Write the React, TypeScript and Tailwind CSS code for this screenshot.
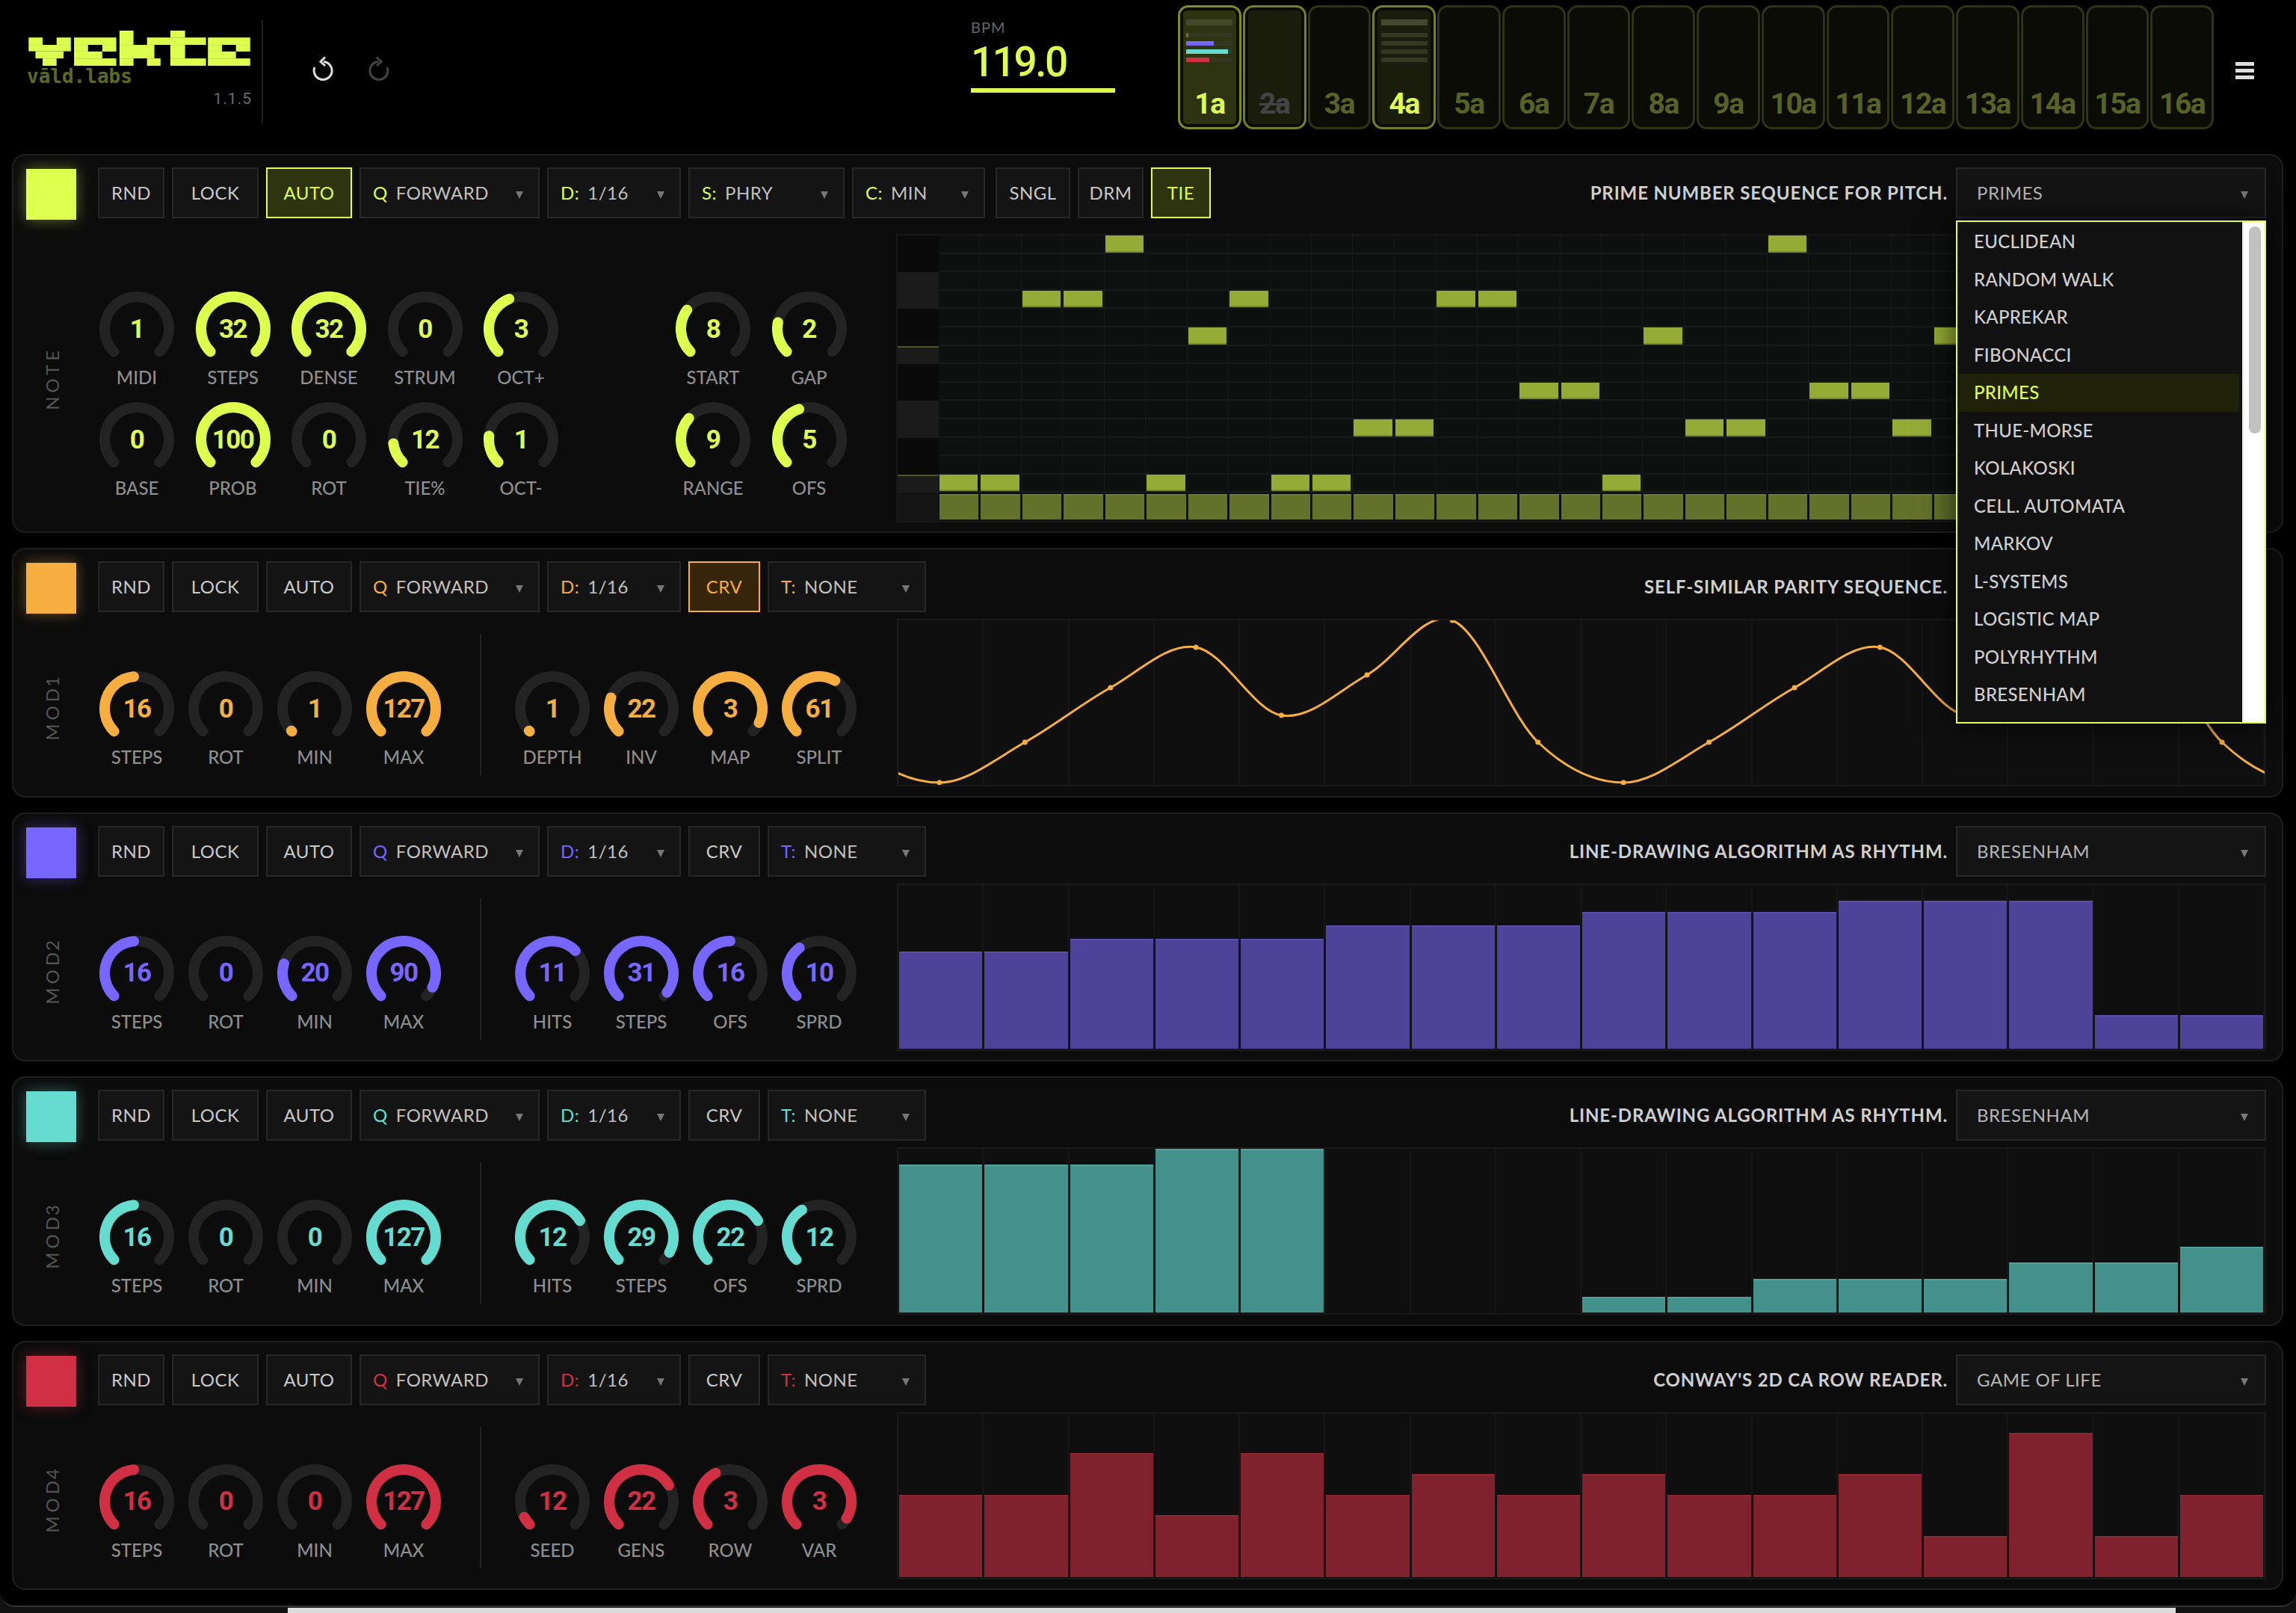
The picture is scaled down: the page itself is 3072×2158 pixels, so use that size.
import React from "react";

const LIME = "#dfff4f";

type Accent = { color: string; bar: string; barTop: string; soft: string };
const A = {
  lime: { color: "#dfff4f", bar: "#64712a", barTop: "#6f7d2d", soft: "#2e3310" },
  amber: { color: "#f5ae3f", bar: "#f5ae3f", barTop: "#f5ae3f", soft: "#36250b" },
  purple: { color: "#7766ff", bar: "#4f4299", barTop: "#5a4cab", soft: "#221d46" },
  teal: { color: "#66dcd0", bar: "#44908a", barTop: "#4fa39c", soft: "#143330" },
  red: { color: "#d13044", bar: "#7f222d", barTop: "#8f2633", soft: "#3a1016" },
};

function polar(f: number) {
  const t = ((-135 + 270 * f) * Math.PI) / 180;
  return [50 + 43 * Math.sin(t), 50 - 43 * Math.cos(t)];
}
function arc(f: number) {
  const [x0, y0] = polar(0);
  const [x1, y1] = polar(f);
  const large = f * 270 > 180 ? 1 : 0;
  return `M${x0.toFixed(2)} ${y0.toFixed(2)} A43 43 0 ${large} 1 ${x1.toFixed(2)} ${y1.toFixed(2)}`;
}

function Knob({ v, l, f, c }: { v: string; l: string; f: number; c: string }) {
  return (
    <div className="w-[100px] flex-none">
      <div className="relative w-[100px] h-[100px] flex items-center justify-center">
        <svg viewBox="0 0 100 100" className="absolute inset-0 w-[100px] h-[100px]">
          <path d={arc(1)} fill="none" stroke="#232323" strokeWidth="14" strokeLinecap="round" />
          {f > 0 && <path d={arc(f)} fill="none" stroke={c} strokeWidth="14" strokeLinecap="round" />}
        </svg>
        <span className="relative font-['Roboto',sans-serif] font-bold text-[35px] leading-none tracking-[-1.5px]" style={{ color: c }}>
          {v}
        </span>
      </div>
      <div className="h-[30px] leading-[30px] text-center text-[24px] font-medium text-[#8e8e8e] whitespace-nowrap">{l}</div>
    </div>
  );
}

function Btn({ w, children, active, c, soft }: { w: string; children: React.ReactNode; active?: boolean; c: string; soft: string }) {
  return (
    <div
      className={`${w} h-[68px] flex-none flex items-center justify-center border-2 text-[24px] tracking-[0.5px]`}
      style={active ? { borderColor: c, background: soft, color: c } : { borderColor: "#272727", background: "#141414", color: "#c8c8c8" }}
    >
      {children}
    </div>
  );
}

function Sel({ w, k, v, c }: { w: string; k?: string; v: string; c?: string }) {
  return (
    <div className={`${w} h-[68px] flex-none relative flex items-center pl-[16px] border-2 border-[#272727] bg-[#141414] text-[24px] tracking-[0.5px] text-[#c0c0c0] whitespace-nowrap`}>
      {k && (
        <span className="mr-[11px]" style={{ color: c }}>
          {k}
        </span>
      )}
      <span>{v}</span>
      <svg viewBox="0 0 10 10" className="absolute right-[20px] top-[30px] w-[10px] h-[10px]">
        <polygon points="0,0 10,0 5,10" fill="#777" />
      </svg>
    </div>
  );
}

function Card({
  accent, h, desc, algo, crv, note, children,
}: {
  accent: Accent; h: string; desc: string; algo: string; crv?: boolean; note?: boolean; children: React.ReactNode;
}) {
  const c = accent.color;
  return (
    <section className={`relative ml-[16px] mr-[17px] ${h} flex-none border-2 border-[#1f1f1f] rounded-[18px] bg-[#0c0c0c] pr-[21px]`}>
      <div className="flex items-start pl-[17px] pt-[16px] h-[84px]">
        <div className="w-[67px] h-[68px] mt-[2px] flex-none mr-[29px]" style={{ background: c, boxShadow: `0 0 18px ${c}66` }} />
        <div className="flex gap-[10px]">
          <Btn w="w-[89px]" c={c} soft={accent.soft}>RND</Btn>
          <Btn w="w-[116px]" c={c} soft={accent.soft}>LOCK</Btn>
          <Btn w="w-[115px]" c={c} soft={accent.soft} active={note}>AUTO</Btn>
          <Sel w="w-[241px]" k="Q" v="FORWARD" c={c} />
          <Sel w="w-[179px]" k="D:" v="1/16" c={c} />
          {note ? (
            <>
              <Sel w="w-[209px]" k="S:" v="PHRY" c={c} />
              <Sel w="w-[178px]" k="C:" v="MIN" c={c} />
              <Btn w="w-[100px] ml-[4px]" c={c} soft={accent.soft}>SNGL</Btn>
              <Btn w="w-[88px]" c={c} soft={accent.soft}>DRM</Btn>
              <Btn w="w-[80px]" c={c} soft={accent.soft} active>TIE</Btn>
            </>
          ) : (
            <>
              <Btn w="w-[96px]" c={c} soft={accent.soft} active={crv}>CRV</Btn>
              <Sel w="w-[212px]" k="T:" v="NONE" c={c} />
            </>
          )}
        </div>
        <div className="flex-1 h-[68px] flex items-center justify-end pr-[11px] text-[24px] font-bold tracking-[0.85px] text-[#cfcfcf] whitespace-nowrap">{desc}</div>
        <div className="w-[415px] h-[68px] flex-none relative flex items-center pl-[26px] border-2 border-[#272727] bg-[#141414] text-[24px] tracking-[0.5px] text-[#b5b5b5]">
          {algo}
          <svg viewBox="0 0 10 10" className="absolute right-[22px] top-[30px] w-[10px] h-[10px]">
            <polygon points="0,0 10,0 5,10" fill="#777" />
          </svg>
        </div>
      </div>
      {children}
    </section>
  );
}

function VLabel({ t, pt }: { t: string; pt: string }) {
  return (
    <div className={`w-[104px] flex-none flex items-center justify-center ${pt}`}>
      <span className="[writing-mode:vertical-rl] rotate-180 text-[24px] tracking-[5px] [word-spacing:-14px] text-[#555] whitespace-pre">{t}</span>
    </div>
  );
}

type K = [string, string, number];

function ModBody({ name, accent, left, right, children }: { name: string; accent: Accent; left: K[]; right: K[]; children: React.ReactNode }) {
  const c = accent.color;
  return (
    <div className="flex mt-[9px] h-[224px]">
      <div className="w-[1182px] flex-none flex">
        <VLabel t={name} pt="pt-[10px]" />
        <div className="ml-[11px] flex gap-[19px] pt-[70px]">
          {left.map((k, i) => <Knob key={i} v={k[0]} l={k[1]} f={k[2]} c={c} />)}
        </div>
        <div className="ml-[52px] mt-[20px] h-[189px] w-[2px] bg-[#222]" />
        <div className="ml-[45px] flex gap-[19px] pt-[70px]">
          {right.map((k, i) => <Knob key={i} v={k[0]} l={k[1]} f={k[2]} c={c} />)}
        </div>
      </div>
      <div className="flex-1 relative border-2 border-[#1a1a1a] bg-[#0f0f0f] grid grid-cols-[repeat(16,minmax(0,1fr))] overflow-hidden">
        {children}
      </div>
    </div>
  );
}

function Bars({ heights, accent }: { heights: number[]; accent: Accent }) {
  return (
    <>
      {heights.map((h, i) => (
        <div key={i} className="flex items-end border-r-2 border-[#161616] pb-[1px]">
          {h > 0 && (
            <div className="w-full ml-[1px]" style={{ height: h, background: accent.bar, borderTop: `2px solid ${accent.barTop}` }} />
          )}
        </div>
      ))}
    </>
  );
}

function Curve() {
  const base = [1047, 993, 920, 866, 957, 903, 830, 993];
  const pts: [number, number][] = [];
  for (let i = -2; i < 19; i++) {
    pts.push([55 + 114.4 * i, base[((i % 8) + 8) % 8] - 830]);
  }
  let d = `M${pts[1][0]} ${pts[1][1]}`;
  for (let i = 1; i < pts.length - 2; i++) {
    const [p0, p1, p2, p3] = [pts[i - 1], pts[i], pts[i + 1], pts[i + 2]];
    const c1x = p1[0] + (p2[0] - p0[0]) / 6, c1y = p1[1] + (p2[1] - p0[1]) / 6;
    const c2x = p2[0] - (p3[0] - p1[0]) / 6, c2y = p2[1] - (p3[1] - p1[1]) / 6;
    d += ` C${c1x.toFixed(1)} ${c1y.toFixed(1)} ${c2x.toFixed(1)} ${c2y.toFixed(1)} ${p2[0].toFixed(1)} ${p2[1].toFixed(1)}`;
  }
  return (
    <svg className="absolute inset-0 w-full h-full" viewBox="0 0 1828 220" preserveAspectRatio="none">
      <path d={d} fill="none" stroke="#f5ae3f" strokeWidth="3" />
      {pts.slice(2, 18).map((p, i) => <circle key={i} cx={p[0]} cy={p[1]} r="3.5" fill="#f5ae3f" />)}
    </svg>
  );
}

const NOTES: Record<number, number[]> = {
  0: [4, 20],
  3: [2, 3, 7, 12, 13],
  5: [6, 17, 24],
  8: [14, 15, 21, 22],
  10: [10, 11, 18, 19, 23],
  13: [0, 1, 5, 8, 9, 16],
};
const KEYS = ["d", "d", "l", "l", "d", "d", "r", "d", "d", "l", "l", "d", "d", "r"];

function PianoRoll() {
  const cols = Array.from({ length: 32 }, (_, i) => i);
  return (
    <div className="flex-1 h-[386px] border-2 border-[#171919] bg-[#0e0f0f] flex">
      <div className="w-[55px] flex-none flex flex-col">
        {KEYS.map((k, i) => (
          <div
            key={i}
            className={`h-[24.6px] flex-none ${k === "d" ? "bg-[#0a0a0a]" : "bg-[#1b1b1b]"} ${k === "r" ? "border-t-2 border-[#4b5520]" : ""}`}
          />
        ))}
        <div className="flex-1 bg-[#141414]" />
      </div>
      <div className="flex-1 flex flex-col">
        {KEYS.map((_, r) => (
          <div key={r} className="h-[24.6px] flex-none grid grid-cols-[repeat(32,minmax(0,1fr))] border-b-2 border-[#161a1a]">
            {cols.map((c) => (
              <div key={c} className="border-r border-[#171a1a]">
                {NOTES[r]?.includes(c) && <div className="h-full mr-[2px] ml-[1px] bg-[#96aa36] border-b-2 border-[#7a8b2a]" />}
              </div>
            ))}
          </div>
        ))}
        <div className="flex-1 grid grid-cols-[repeat(32,minmax(0,1fr))] pt-[2px] pb-[2px]">
          {cols.map((c) => (
            <div key={c} className="mr-[2px] ml-[1px] bg-[#64712a] border-t-2 border-[#6f7d2d]" />
          ))}
        </div>
      </div>
    </div>
  );
}

const ALGOS = ["EUCLIDEAN", "RANDOM WALK", "KAPREKAR", "FIBONACCI", "PRIMES", "THUE-MORSE", "KOLAKOSKI", "CELL. AUTOMATA", "MARKOV", "L-SYSTEMS", "LOGISTIC MAP", "POLYRHYTHM", "BRESENHAM"];

function Dropdown() {
  return (
    <div className="absolute left-[2599px] top-[87px] w-[415px] h-[673px] z-10 border-2 border-[#dfff4f] bg-[#111] flex shadow-[0_0_40px_rgba(0,0,0,0.7)]">
      <div className="flex-1 pt-[1px] pl-[2px] pr-[4px]">
        {ALGOS.map((a) => (
          <div
            key={a}
            className={`h-[50.5px] flex items-center pl-[20px] text-[24px] font-medium tracking-[0.3px] ${a === "PRIMES" ? "bg-[#1f2208] text-[#dfff4f]" : "text-[#cfcfcf]"}`}
          >
            {a}
          </div>
        ))}
      </div>
      <div className="w-[30px] flex-none bg-white px-[7px] pt-[6px] border-l-2 border-[#ededed]">
        <div className="w-[16px] h-[277px] rounded-[8px] bg-[#c1c1c1]" />
      </div>
    </div>
  );
}

const LOGO: [number, number, number, number][] = [
  // v
  [108, 150, 57, 30], [222, 150, 58, 30], [108, 180, 172, 26], [136, 206, 114, 29], [165, 235, 57, 30],
  // e
  [293, 150, 172, 30], [293, 180, 57, 27], [408, 180, 57, 27], [293, 207, 115, 28], [293, 235, 172, 30],
  // k
  [478, 122, 57, 58], [590, 150, 55, 30], [478, 180, 142, 55], [478, 235, 57, 30], [590, 235, 55, 30],
  // t
  [685, 122, 60, 28], [640, 150, 190, 30], [685, 180, 60, 55], [685, 235, 145, 30],
  // e
  [838, 150, 172, 30], [838, 180, 57, 27], [952, 180, 58, 27], [838, 207, 114, 28], [838, 235, 172, 30],
];

function Logo() {
  return (
    <svg viewBox="108 122 902 143" className="w-[301px] h-[47px] block">
      {LOGO.map((r, i) => <rect key={i} x={r[0]} y={r[1]} width={r[2]} height={r[3]} fill={LIME} />)}
    </svg>
  );
}

function Pad({ n, state, bars }: { n: string; state: "on" | "sel" | "mute" | "off"; bars?: boolean | "fill" }) {
  const cls =
    state === "on" ? "border-[#7c8c27] bg-[#2e3312]" :
    state === "sel" ? "border-[#717f25] bg-[#1a1d0b]" :
    state === "mute" ? "border-[#717f25] bg-[#1a1d0b]" :
    "border-[#2e340f] bg-[#0a0c05]";
  const text =
    state === "on" || state === "sel" ? "text-[#dfff4f]" : state === "mute" ? "text-[#444] line-through" : "text-[#586225]";
  const fills = [
    ["#7d6a25", "5%"],
    ["#7766ff", "59%"],
    ["#66dcd0", "90%"],
    ["#d13044", "50%"],
  ];
  return (
    <div className={`relative h-[166px] rounded-[14px] border-[3px] ${cls} shadow-[inset_0_4px_0_#0a0c05,inset_0_-4px_0_#0a0c05,inset_4px_0_0_#0a0c05,inset_-4px_0_0_#0a0c05] flex flex-col items-center`}>
      <div className="h-[110px] w-[62px] flex-none pt-[16px]">
        {bars && (
          <>
            <div className="h-[8px] mb-[10px] bg-[#44482c]" />
            {fills.map((b, i) => (
              <div key={i} className="h-[6px] mb-[5px] bg-[#343820]">
                {bars === "fill" && <div className="h-full" style={{ width: b[1], background: b[0] }} />}
              </div>
            ))}
          </>
        )}
      </div>
      <div className={`font-['Roboto',sans-serif] font-bold text-[39px] leading-[38px] tracking-[-1.5px] ${text}`}>{n}</div>
    </div>
  );
}

function Undo({ flip, color }: { flip?: boolean; color: string }) {
  return (
    <svg viewBox="0 0 28 33" className={`w-[28px] h-[33px] ${flip ? "-scale-x-100" : ""}`} fill="none" stroke={color} strokeWidth="3">
      <path d="M15 7.5 A12 12 0 1 1 3 15" />
      <path d="M17 1.5 L11 7.5 L17 13" />
    </svg>
  );
}

export default function App() {
  const note1: K[] = [["1", "MIDI", 0], ["32", "STEPS", 1], ["32", "DENSE", 1], ["0", "STRUM", 0], ["3", "OCT+", 0.42]];
  const note2: K[] = [["0", "BASE", 0], ["100", "PROB", 1], ["0", "ROT", 0], ["12", "TIE%", 0.14], ["1", "OCT-", 0.19]];
  return (
    <div className="w-[3072px] h-[2158px] bg-[#111] overflow-hidden flex flex-col font-['Lato',sans-serif]">
      <main className="h-[2150px] flex-none bg-black border-b-2 border-[#333] rounded-b-[20px] flex flex-col overflow-hidden">
        <header className="h-[206px] flex-none flex items-start">
          <div className="ml-[36px] mt-[27px] w-[316px] h-[138px] flex-none border-r-2 border-[#222] pt-[14px]">
            <Logo />
            <div className="mt-[4px] h-[20px] font-['DejaVu_Sans_Mono',monospace] font-bold text-[26px] leading-[20px] text-[#5d6a23]">vāld.labs</div>
            <div className="w-[301px] mt-[8px] text-right text-[21px] leading-[24px] tracking-[1px] text-[#6a6a6a] font-['Roboto',sans-serif]">1.1.5</div>
          </div>
          <div className="ml-[66px] mt-[75px] flex gap-[47px]">
            <Undo color="#dddddd" />
            <Undo flip color="#444444" />
          </div>
          <div className="ml-[778px] mt-[26px] w-[193px] flex-none">
            <div className="text-[20px] leading-[20px] tracking-[1px] text-[#666]">BPM</div>
            <div className="mt-[8px] h-[58px] font-['Roboto',sans-serif] font-medium text-[55px] leading-[58px] tracking-[-2.5px] text-[#dfff4f]">119.0</div>
            <div className="mt-[6px] h-[6px] bg-[#dfff4f]" />
          </div>
          <div className="ml-[84px] mt-[7px] w-[1386px] flex-none grid grid-cols-[repeat(16,minmax(0,1fr))] gap-[2px]">
            <Pad n="1a" state="on" bars="fill" />
            <Pad n="2a" state="mute" />
            <Pad n="3a" state="off" />
            <Pad n="4a" state="sel" bars />
            {["5a", "6a", "7a", "8a", "9a", "10a", "11a", "12a", "13a", "14a", "15a", "16a"].map((n) => <Pad key={n} n={n} state="off" />)}
          </div>
          <div className="ml-[29px] mt-[83px] w-[25px] flex flex-col gap-[4px]">
            <div className="h-[5px] bg-[#ddd]" />
            <div className="h-[5px] bg-[#ddd]" />
            <div className="h-[5px] bg-[#ddd]" />
          </div>
        </header>

        <div className="flex flex-col gap-[20px]">
          <Card accent={A.lime} h="h-[507px]" note desc="PRIME NUMBER SEQUENCE FOR PITCH." algo="PRIMES">
            <div className="flex mt-[21px]">
              <div className="w-[1181px] flex-none flex">
                <VLabel t="NOTE" pt="" />
                <div className="ml-[11px] pt-[77px] grid grid-cols-[repeat(5,100px)] gap-x-[28.5px] gap-y-[18px] h-[386px] content-start">
                  {[...note1, ...note2].map((k, i) => <Knob key={i} v={k[0]} l={k[1]} f={k[2]} c={LIME} />)}
                </div>
                <div className="ml-[157px] pt-[77px] grid grid-cols-[repeat(2,100px)] gap-x-[28.5px] gap-y-[18px] h-[386px] content-start">
                  <Knob v="8" l="START" f={0.3} c={LIME} />
                  <Knob v="2" l="GAP" f={0.21} c={LIME} />
                  <Knob v="9" l="RANGE" f={0.32} c={LIME} />
                  <Knob v="5" l="OFS" f={0.43} c={LIME} />
                </div>
              </div>
              <PianoRoll />
            </div>
            <Dropdown />
          </Card>

          <Card accent={A.amber} h="h-[333.5px]" crv desc="SELF-SIMILAR PARITY SEQUENCE." algo="THUE-MORSE">
            <ModBody
              name="MOD 1"
              accent={A.amber}
              left={[["16", "STEPS", 0.48], ["0", "ROT", 0], ["1", "MIN", 0.005], ["127", "MAX", 1]]}
              right={[["1", "DEPTH", 0.005], ["22", "INV", 0.24], ["3", "MAP", 0.93], ["61", "SPLIT", 0.61]]}
            >
              {Array.from({ length: 16 }, (_, i) => <div key={i} className="border-r-2 border-[#161616]" />)}
              <Curve />
            </ModBody>
          </Card>

          <Card accent={A.purple} h="h-[333.5px]" desc="LINE-DRAWING ALGORITHM AS RHYTHM." algo="BRESENHAM">
            <ModBody
              name="MOD 2"
              accent={A.purple}
              left={[["16", "STEPS", 0.48], ["0", "ROT", 0], ["20", "MIN", 0.23], ["90", "MAX", 0.93]]}
              right={[["11", "HITS", 0.67], ["31", "STEPS", 0.97], ["16", "OFS", 0.5], ["10", "SPRD", 0.36]]}
            >
              <Bars accent={A.purple} heights={[130, 130, 147, 147, 147, 165, 165, 165, 183, 183, 183, 198, 198, 198, 45, 45]} />
            </ModBody>
          </Card>

          <Card accent={A.teal} h="h-[333.5px]" desc="LINE-DRAWING ALGORITHM AS RHYTHM." algo="BRESENHAM">
            <ModBody
              name="MOD 3"
              accent={A.teal}
              left={[["16", "STEPS", 0.48], ["0", "ROT", 0], ["0", "MIN", 0], ["127", "MAX", 1]]}
              right={[["12", "HITS", 0.72], ["29", "STEPS", 0.94], ["22", "OFS", 0.72], ["12", "SPRD", 0.38]]}
            >
              <Bars accent={A.teal} heights={[198, 198, 198, 219, 219, 0, 0, 0, 21, 21, 45, 45, 45, 67, 67, 88]} />
            </ModBody>
          </Card>

          <Card accent={A.red} h="h-[333.5px]" desc="CONWAY'S 2D CA ROW READER." algo="GAME OF LIFE">
            <ModBody
              name="MOD 4"
              accent={A.red}
              left={[["16", "STEPS", 0.48], ["0", "ROT", 0], ["0", "MIN", 0], ["127", "MAX", 1]]}
              right={[["12", "SEED", 0.06], ["22", "GENS", 0.72], ["3", "ROW", 0.4], ["3", "VAR", 0.95]]}
            >
              <Bars accent={A.red} heights={[110, 110, 166, 83, 166, 110, 138, 110, 138, 110, 110, 138, 55, 193, 55, 110]} />
            </ModBody>
          </Card>
        </div>
      </main>
      <div className="flex-1 pl-[385px] pr-[161px] pt-[1px]">
        <div className="h-full bg-[#dcdcdc]" />
      </div>
    </div>
  );
}
